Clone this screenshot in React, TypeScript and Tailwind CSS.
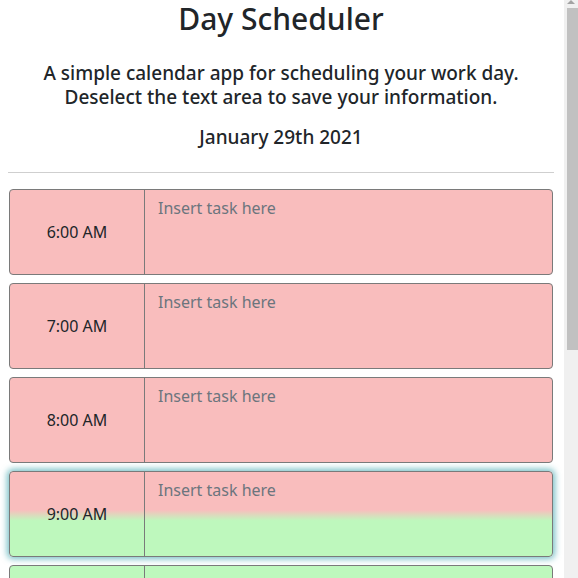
import React from "react";

const rows = [
  { time: "6:00 AM", kind: "past" },
  { time: "7:00 AM", kind: "past" },
  { time: "8:00 AM", kind: "past" },
  { time: "9:00 AM", kind: "present" },
  { time: "10:00 AM", kind: "future" },
  { time: "11:00 AM", kind: "future" },
];

function Row({ time, kind }: { time: string; kind: string }) {
  const bg =
    kind === "past"
      ? "bg-[#f9bdbd]"
      : kind === "future"
      ? "bg-[#bef8bd]"
      : "bg-[linear-gradient(180deg,#f9bdbd_0%,#f9bdbd_45%,#bef8bd_58%,#bef8bd_100%)] shadow-[0_0_6px_2px_rgba(30,150,160,0.6)]";
  return (
    <div
      className={`flex h-[86px] shrink-0 rounded-[4px] border border-[#7a7a7a] overflow-hidden ${bg}`}
    >
      <div className="w-[135px] shrink-0 flex items-center justify-center border-r border-[#7a7a7a] text-[16px] text-[#212529]">
        {time}
      </div>
      <div className="flex-1 pl-[13px] pt-[6px] text-[16px] text-[#6c757d]">
        Insert task here
      </div>
    </div>
  );
}

export default function App() {
  return (
    <div
      className="flex h-[578px] w-[578px] overflow-hidden bg-white"
      style={{ fontFamily: '"Noto Sans", "Open Sans", sans-serif' }}
    >
      <div className="flex-1 flex flex-col overflow-hidden pl-[9px] pr-[10px] pt-[1px]">
        <h1 className="text-center text-[30px] leading-[36px] font-medium text-[#212529]">
          Day Scheduler
        </h1>
        <p className="text-center text-[19px] leading-[24px] font-medium text-[#212529] mt-[24px]">
          A simple calendar app for scheduling your work day.
          <br />
          Deselect the text area to save your information.
        </p>
        <p className="text-center text-[19px] leading-[24px] font-medium text-[#212529] mt-[16px]">
          January 29th 2021
        </p>
        <hr className="border-0 border-t border-[#cfcfcf] mt-[23px] mx-[-1px]" />
        <div className="flex flex-col gap-[8px] mt-[16px]">
          {rows.map((r) => (
            <Row key={r.time} time={r.time} kind={r.kind} />
          ))}
        </div>
      </div>
      <div className="w-[14px] shrink-0 bg-[#f0f0f0] flex flex-col items-center ml-[1px]">
        <div className="h-[8px] flex items-start justify-center">
          <div className="w-0 h-0 border-l-[4px] border-r-[4px] border-b-[4px] border-l-transparent border-r-transparent border-b-[#a3a3a3]" />
        </div>
        <div className="w-[11px] h-[342px] bg-[#c1c1c1] ml-[2px]" />
      </div>
    </div>
  );
}
